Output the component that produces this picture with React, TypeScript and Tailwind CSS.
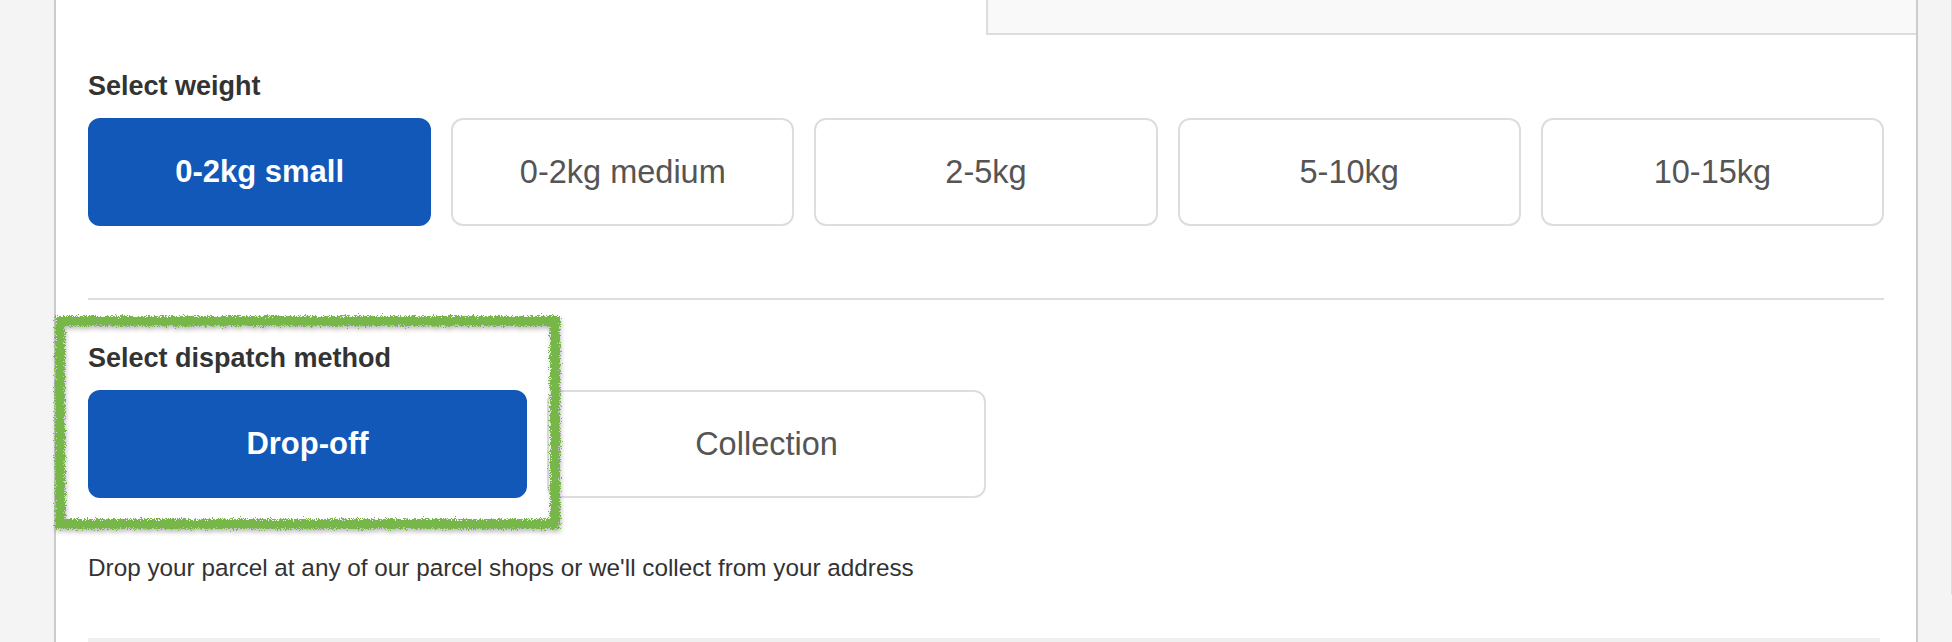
import React, { useState } from 'react';

const weights = ['0-2kg small', '0-2kg medium', '2-5kg', '5-10kg', '10-15kg'];
const methods = ['Drop-off', 'Collection'];

interface OptionButtonProps {
  label: string;
  selected: boolean;
  onClick: () => void;
}

const OptionButton: React.FC<OptionButtonProps> = ({ label, selected, onClick }) => (
  <button
    onClick={onClick}
    className={
      selected
        ? 'h-[108px] rounded-[12px] border-2 border-[#1258b8] bg-[#1258b8] text-[31px] font-bold text-white'
        : 'h-[108px] rounded-[12px] border-2 border-[#dddddd] bg-white text-[32.5px] text-[#555555]'
    }
  >
    {label}
  </button>
);

// hand drawn highlight round the dispatch block
const Highlight = () => (
  <svg
    className="pointer-events-none absolute left-[40px] top-[300px]"
    width="540"
    height="250"
    viewBox="0 0 540 250"
  >
    <defs>
      <filter id="rough" x="-5%" y="-5%" width="110%" height="120%">
        <feTurbulence type="fractalNoise" baseFrequency="1.4" numOctaves="3" seed="5" result="noise" />
        <feDisplacementMap in="SourceGraphic" in2="noise" scale="8" xChannelSelector="R" yChannelSelector="G" result="moved" />
        <feDropShadow dx="1" dy="3" stdDeviation="2" floodColor="#000000" floodOpacity="0.25" />
      </filter>
    </defs>
    <rect
      x="20"
      y="21"
      width="495"
      height="203"
      fill="none"
      stroke="#77b74a"
      strokeWidth="10"
      filter="url(#rough)"
    />
  </svg>
);

export default function App() {
  const [weight, setWeight] = useState(0);
  const [method, setMethod] = useState(0);

  return (
    <div
      className="relative flex h-[642px] w-[1952px] overflow-hidden bg-[#f4f4f4]"
      style={{ fontFamily: '"Liberation Sans", Arial, sans-serif' }}
    >
      <div className="w-[54px] shrink-0" />
      <div className="flex w-[1864px] shrink-0 flex-col overflow-hidden border-x-2 border-[#cccccc] bg-white">
        <div className="grid h-[35px] shrink-0 grid-cols-2">
          <div className="bg-white" />
          <div className="border-b-2 border-l-2 border-[#dddddd] bg-[#f9f9f9]" />
        </div>

        <div className="flex shrink-0 flex-col px-[32px] pt-[34px]">
          <h3 className="text-[27px] font-bold leading-[35px] text-[#333333]">Select weight</h3>
          <div className="mt-[14px] grid grid-cols-5 gap-[20px]">
            {weights.map((w, i) => (
              <OptionButton key={w} label={w} selected={weight === i} onClick={() => setWeight(i)} />
            ))}
          </div>

          <div className="mt-[72px] h-[2px] bg-[#dddddd]" />

          <h3 className="mt-[41px] text-[27px] font-bold leading-[35px] text-[#333333]">
            Select dispatch method
          </h3>
          <div className="mt-[14px] grid w-1/2 grid-cols-2 gap-[20px]">
            {methods.map((m, i) => (
              <OptionButton key={m} label={m} selected={method === i} onClick={() => setMethod(i)} />
            ))}
          </div>

          <p className="mt-[52px] text-[24.3px] leading-[36px] text-[#333333]">
            Drop your parcel at any of our parcel shops or we'll collect from your address
          </p>

          <div className="mr-[4px] mt-[52px] h-[10px] shrink-0 bg-[#efefef]" />
        </div>
      </div>
      <div className="flex flex-1 justify-end">
        <div className="mb-[48px] w-px bg-[#dddddd]" />
      </div>

      <Highlight />
    </div>
  );
}
